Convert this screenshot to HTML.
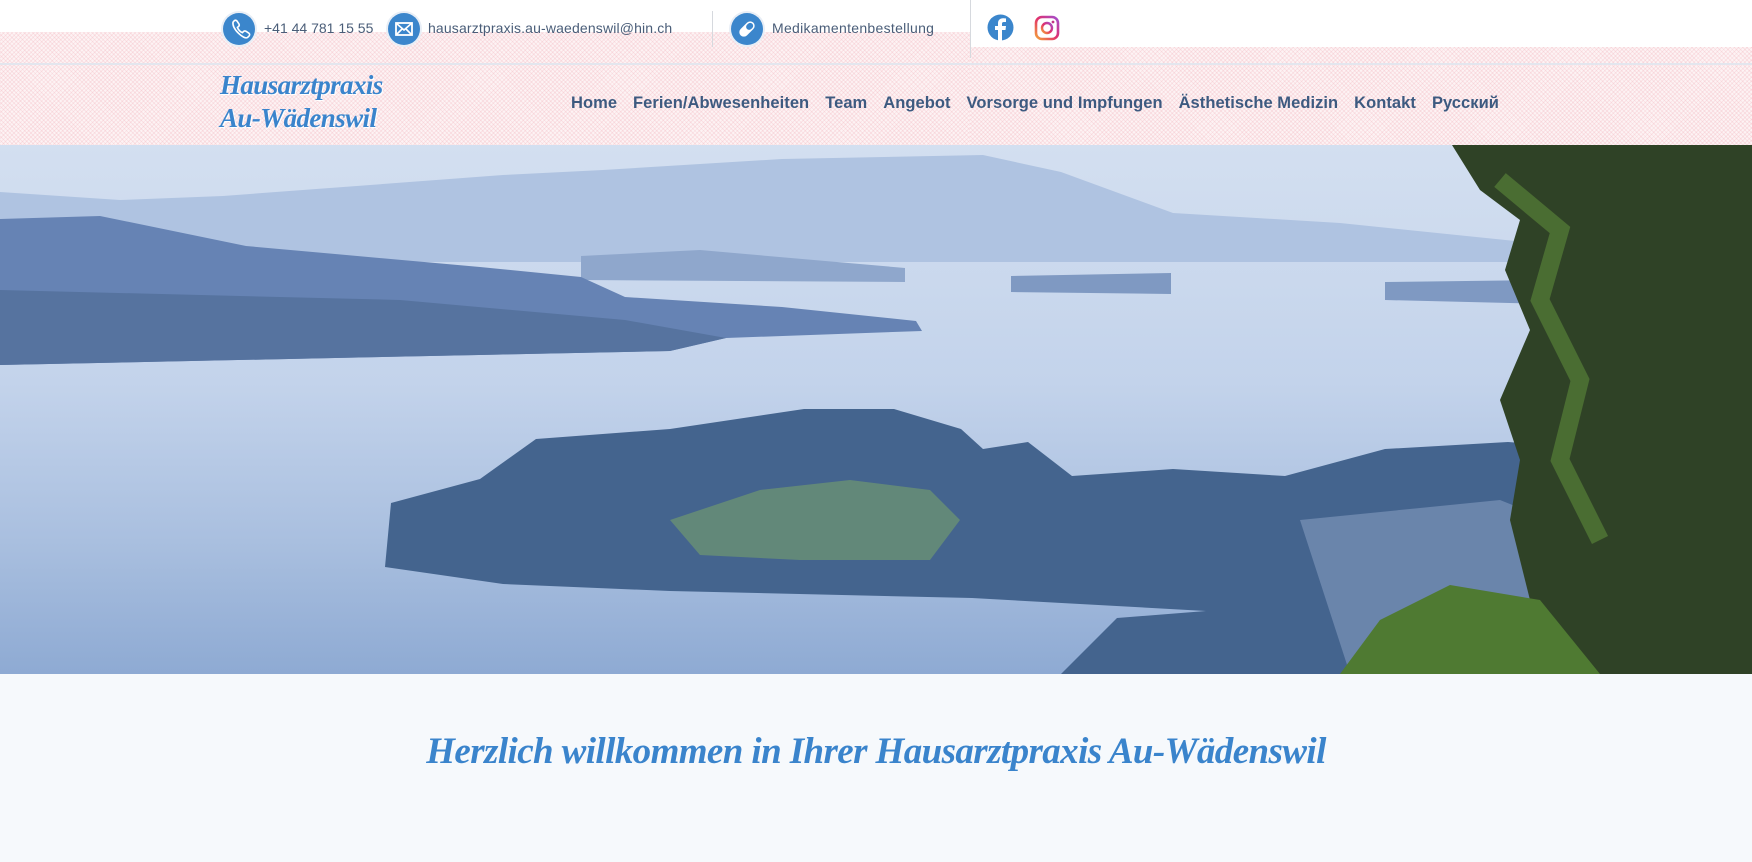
<!DOCTYPE html>
<html><head><meta charset="utf-8"><style>
*{margin:0;padding:0;box-sizing:border-box}
body{width:1752px;height:862px;overflow:hidden;background:#fff;font-family:"Liberation Sans",sans-serif;position:relative}
.pink{position:absolute;background-color:#fdf3f4;background-image:repeating-linear-gradient(45deg,rgba(240,170,180,.25) 0 1px,transparent 1px 3px),repeating-linear-gradient(-45deg,rgba(240,170,180,.25) 0 1px,transparent 1px 3px)}
.ic{position:absolute;top:13px;width:32px;height:32px;border-radius:50%;background:#3b86cc;box-shadow:0 0 0 2px #e8eef6}
.t{position:absolute;top:20px;font-size:14px;color:#4a5d78}
.nav{position:absolute;top:94px;left:571px;display:flex;gap:16px;font-weight:bold;font-size:16.5px;letter-spacing:.05px;color:#3d5a80}
.logo{position:absolute;left:220px;font-family:"Liberation Serif",serif;font-style:italic;font-weight:bold;color:#3a84cc;font-size:27px;letter-spacing:-.6px;text-shadow:1px 1px 0 #fff}
</style></head><body>
<div class="pink" style="left:0;top:32px;width:970px;height:113px"></div>
<div class="pink" style="left:970px;top:47px;width:782px;height:98px"></div>
<div style="position:absolute;left:0;top:63px;width:1752px;height:2px;background:#e3e6ee"></div>
<div style="position:absolute;left:0;top:0;width:970px;height:32px;background:#fff"></div>
<div style="position:absolute;left:970px;top:0;width:782px;height:47px;background:#fff"></div>
<div style="position:absolute;left:712px;top:11px;width:1px;height:36px;background:#d6d9de"></div>
<div style="position:absolute;left:970px;top:0;width:1px;height:58px;background:#d6d9de"></div>

<div class="ic" style="left:223px"><svg width="32" height="32" viewBox="0 0 32 32"><path d="M11 8c1-1 2-1 3 0l2 3c.5 1 .2 2-.6 2.6l-1 .8c1 2.5 2.8 4.3 5 5.3l.9-1c.7-.8 1.7-1 2.6-.5l3 2c1 .8 1 2 0 3l-1.4 1.3C21 27 9 16 10 9.2z" fill="none" stroke="#fff" stroke-width="1.6"/></svg></div>
<div class="t" style="left:264px">+41 44 781 15 55</div>
<div class="ic" style="left:388px"><svg width="32" height="32" viewBox="0 0 32 32"><rect x="8" y="10" width="16" height="12" fill="none" stroke="#fff" stroke-width="1.8"/><path d="M8 10l8 7 8-7M8 22l6-6M24 22l-6-6" fill="none" stroke="#fff" stroke-width="1.6"/></svg></div>
<div class="t" style="left:428px;letter-spacing:.15px">hausarztpraxis.au-waedenswil@hin.ch</div>
<div class="ic" style="left:731px"><svg width="32" height="32" viewBox="0 0 32 32"><g transform="rotate(-45 16 16)"><rect x="7" y="11.5" width="18" height="9" rx="4.5" fill="#fff"/><rect x="16" y="13" width="7.5" height="6" rx="3" fill="#3b86cc"/></g></svg></div>
<div class="t" style="left:772px;letter-spacing:.3px">Medikamentenbestellung</div>
<svg style="position:absolute;left:987px;top:14px" width="27" height="27" viewBox="0 0 27 27"><circle cx="13.5" cy="13.5" r="13" fill="#3b86cc"/><path d="M15 27V16h3.5l.5-4H15V9.8c0-1.1.4-1.8 1.9-1.8H19V4.5c-.5 0-1.7-.2-3-.2-3 0-5 1.8-5 5.1V12H8v4h3v11z" fill="#fff"/></svg>
<svg style="position:absolute;left:1034px;top:15px" width="26" height="26" viewBox="0 0 26 26"><defs><linearGradient id="ig" x1="0" y1="1" x2="1" y2="0"><stop offset="0" stop-color="#f4a13a"/><stop offset=".5" stop-color="#e1306c"/><stop offset="1" stop-color="#a34fd0"/></linearGradient></defs><rect x="2" y="2" width="22" height="22" rx="6" fill="none" stroke="url(#ig)" stroke-width="2.6"/><circle cx="13" cy="13" r="5" fill="none" stroke="url(#ig)" stroke-width="2.4"/><circle cx="19" cy="7" r="1.4" fill="#c13584"/></svg>

<div class="logo" style="top:70px">Hausarztpraxis</div>
<div class="logo" style="top:103px">Au-Wädenswil</div>
<div class="nav"><span>Home</span><span>Ferien/Abwesenheiten</span><span>Team</span><span>Angebot</span><span>Vorsorge und Impfungen</span><span>Ästhetische Medizin</span><span>Kontakt</span><span>Русский</span></div>

<svg style="position:absolute;left:0;top:145px" width="1752" height="529" viewBox="0 145 1752 529">
<defs><linearGradient id="lk" x1="0" y1="0" x2="0" y2="1"><stop offset="0" stop-color="#d3dff0"/><stop offset=".45" stop-color="#c3d3eb"/><stop offset=".75" stop-color="#a9bfdf"/><stop offset="1" stop-color="#8eaad3"/></linearGradient></defs>
<rect x="0" y="145" width="1752" height="529" fill="url(#lk)"/>
<path d="M0 192L120 200 223 196 503 175 603 170 782 159 983 155 1061 172 1173 213 1340 223 1564 246 1564 262 0 262z" fill="#afc3e1"/>
<path d="M581 256L700 250 905 268 905 282 581 280z" fill="#8fa7cc"/>
<path d="M1011 276L1171 273 1171 294 1011 292z M1385 282L1550 280 1550 304 1385 300z" fill="#7f99c2"/>
<path d="M0 219L100 216 246 246 480 267 581 277 625 297 782 307 916 321 922 331 726 338 670 351 335 358 0 365z" fill="#6683b4"/>
<path d="M0 290L400 300 625 320 726 338 670 351 335 358 0 365z" fill="#56739f"/>
<path d="M385 567L391 503 480 479 536 439 670 429 804 409 894 409 961 429 983 449 1028 442 1072 476 1173 469 1285 476 1385 449 1508 442 1600 449 1600 674 1061 674 1117 618 1206 611 972 598 670 591 503 584z" fill="#44648e"/>
<path d="M670 520L760 490 850 480 930 490 960 520 930 560 800 560 700 555z" fill="#6a9174" opacity=".8"/>
<path d="M1300 520L1500 500 1600 540 1600 674 1350 674z" fill="#7b93b8" opacity=".7"/>
<path d="M1452 145L1752 145 1752 674 1560 674 1530 600 1510 520 1520 460 1500 400 1530 330 1505 270 1520 220 1480 190z" fill="#2f4226"/>
<path d="M1340 674L1380 620 1450 585 1540 600 1600 674z" fill="#4f7a32"/>
<path d="M1500 180L1560 230 1540 300 1580 380 1560 460 1600 540" stroke="#5d8a3a" stroke-width="18" fill="none" opacity=".6"/>
</svg>

<div style="position:absolute;left:0;top:674px;width:1752px;height:188px;background:#f6f9fc"></div>
<div style="position:absolute;left:0;top:730px;width:1752px;text-align:center;font-family:'Liberation Serif',serif;font-style:italic;font-weight:bold;font-size:37px;color:#3a84cc;letter-spacing:-.6px">Herzlich willkommen in Ihrer Hausarztpraxis Au-Wädenswil</div>
</body></html>
